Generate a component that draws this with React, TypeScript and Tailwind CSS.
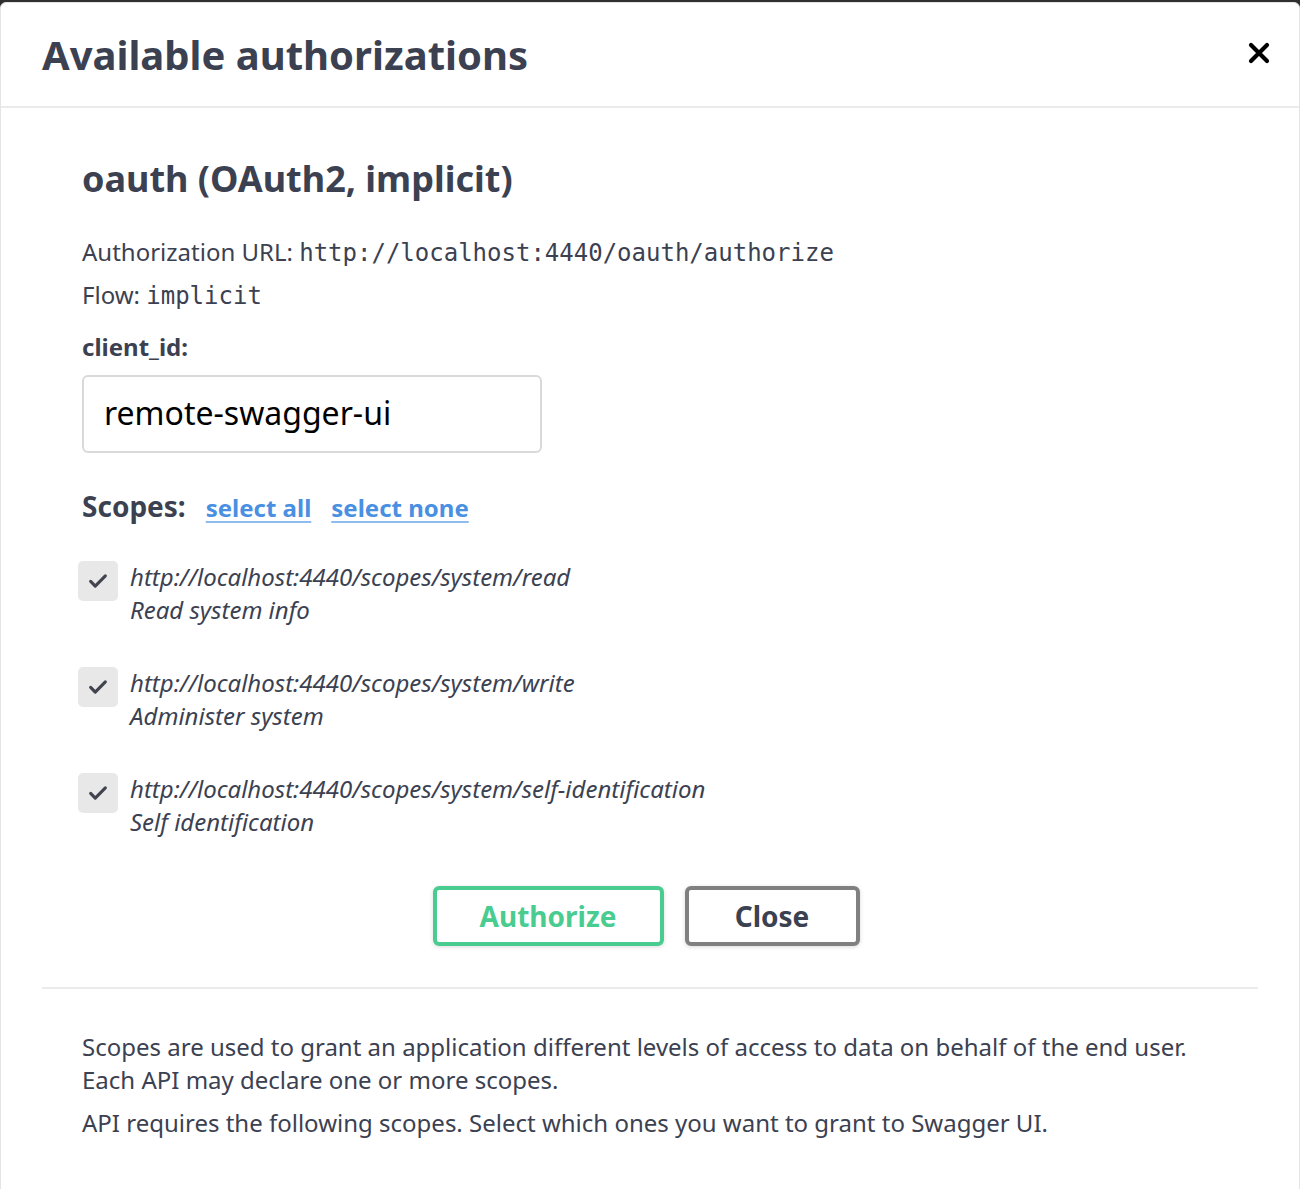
import React from "react";

const font = { fontFamily: '"Noto Sans", "Open Sans", sans-serif' };

function Check() {
  return (
    <div className="w-[40px] h-[40px] rounded-[5px] bg-[#e8e8e8] flex items-center justify-center shrink-0">
      <svg width="22" height="22" viewBox="0 0 24 24" fill="none">
        <path d="M4 12.5l5 5L20 6.5" stroke="#41444e" strokeWidth="3.4" strokeLinecap="round" strokeLinejoin="round" />
      </svg>
    </div>
  );
}

function Scope({ url, desc }: { url: string; desc: string }) {
  return (
    <div className="flex gap-[12px] items-start">
      <Check />
      <div className="italic text-[24px] leading-[33px] text-[#3b4151] -mt-[1px]">
        <div>{url}</div>
        <div>{desc}</div>
      </div>
    </div>
  );
}

export default function App() {
  return (
    <div className="w-[1300px] h-[1189px] bg-[#2f2f2f] pt-[2px] overflow-hidden" style={font}>
      <div className="h-[1200px] bg-white rounded-[6px] border border-[#e4e4e4] text-[#3b4151]">
        <div className="h-[105px] border-b-2 border-[#ebebeb] flex items-center justify-between pl-[41px] pr-[28px]">
          <h3 className="text-[40px] font-bold leading-none">Available authorizations</h3>
          <svg width="24" height="24" viewBox="0 0 24 24" className="-mt-[4px]">
            <path d="M4 4L20 20M20 4L4 20" stroke="#000" strokeWidth="4.2" strokeLinecap="round" />
          </svg>
        </div>
        <div className="px-[41px]">
          <div className="px-[40px] pt-[49px]">
            <h4 className="text-[36px] font-bold leading-[44px]">oauth (OAuth2, implicit)</h4>
            <div className="mt-[35px] text-[24px] leading-[32px]">
              Authorization URL:{" "}
              <code className="text-[24px]" style={{ fontFamily: '"DejaVu Sans Mono", monospace' }}>
                http://localhost:4440/oauth/authorize
              </code>
            </div>
            <div className="mt-[10px] text-[24px] leading-[32px]">
              Flow:{" "}
              <code className="text-[24px]" style={{ fontFamily: '"DejaVu Sans Mono", monospace' }}>
                implicit
              </code>
            </div>
            <div className="mt-[19px] text-[24px] font-bold leading-[32px]">client_id:</div>
            <div className="mt-[12px] w-[460px] h-[78px] border-2 border-[#d9d9d9] rounded-[6px] flex items-center px-[20px]">
              <span className="text-[32px] text-black -mt-[2px]">remote-swagger-ui</span>
            </div>
            <div className="mt-[32px] flex items-baseline gap-[20px]">
              <span className="text-[28px] font-bold">Scopes:</span>
              <a className="text-[24px] font-bold text-[#4990e2] underline underline-offset-[4px] decoration-[2px] decoration-[#8fbcf0]">select all</a>
              <a className="text-[24px] font-bold text-[#4990e2] underline underline-offset-[4px] decoration-[2px] decoration-[#8fbcf0]">select none</a>
            </div>
            <div className="mt-[34px] ml-[-4px] flex flex-col gap-[41px]">
              <Scope url="http://localhost:4440/scopes/system/read" desc="Read system info" />
              <Scope url="http://localhost:4440/scopes/system/write" desc="Administer system" />
              <Scope url="http://localhost:4440/scopes/system/self-identification" desc="Self identification" />
            </div>
            <div className="mt-[48px] flex justify-center gap-[21px] pr-[8px]">
              <button className="w-[231px] h-[60px] border-4 border-[#49cc90] rounded-[6px] text-[#49cc90] text-[28px] font-bold shadow-[0_1px_4px_rgba(0,0,0,0.15)]">
                Authorize
              </button>
              <button className="w-[175px] h-[60px] border-4 border-[#808080] rounded-[6px] text-[#3b4151] text-[28px] font-bold shadow-[0_1px_4px_rgba(0,0,0,0.15)]">
                Close
              </button>
            </div>
          </div>
          <div className="mt-[41px] border-t-2 border-[#ebebeb]" />
          <div className="px-[40px] pt-[41px] text-[24px] leading-[33px]">
            <p>
              Scopes are used to grant an application different levels of access to data on behalf of the end user.
              <br />
              Each API may declare one or more scopes.
            </p>
            <p className="mt-[10px]">API requires the following scopes. Select which ones you want to grant to Swagger UI.</p>
          </div>
        </div>
      </div>
    </div>
  );
}
